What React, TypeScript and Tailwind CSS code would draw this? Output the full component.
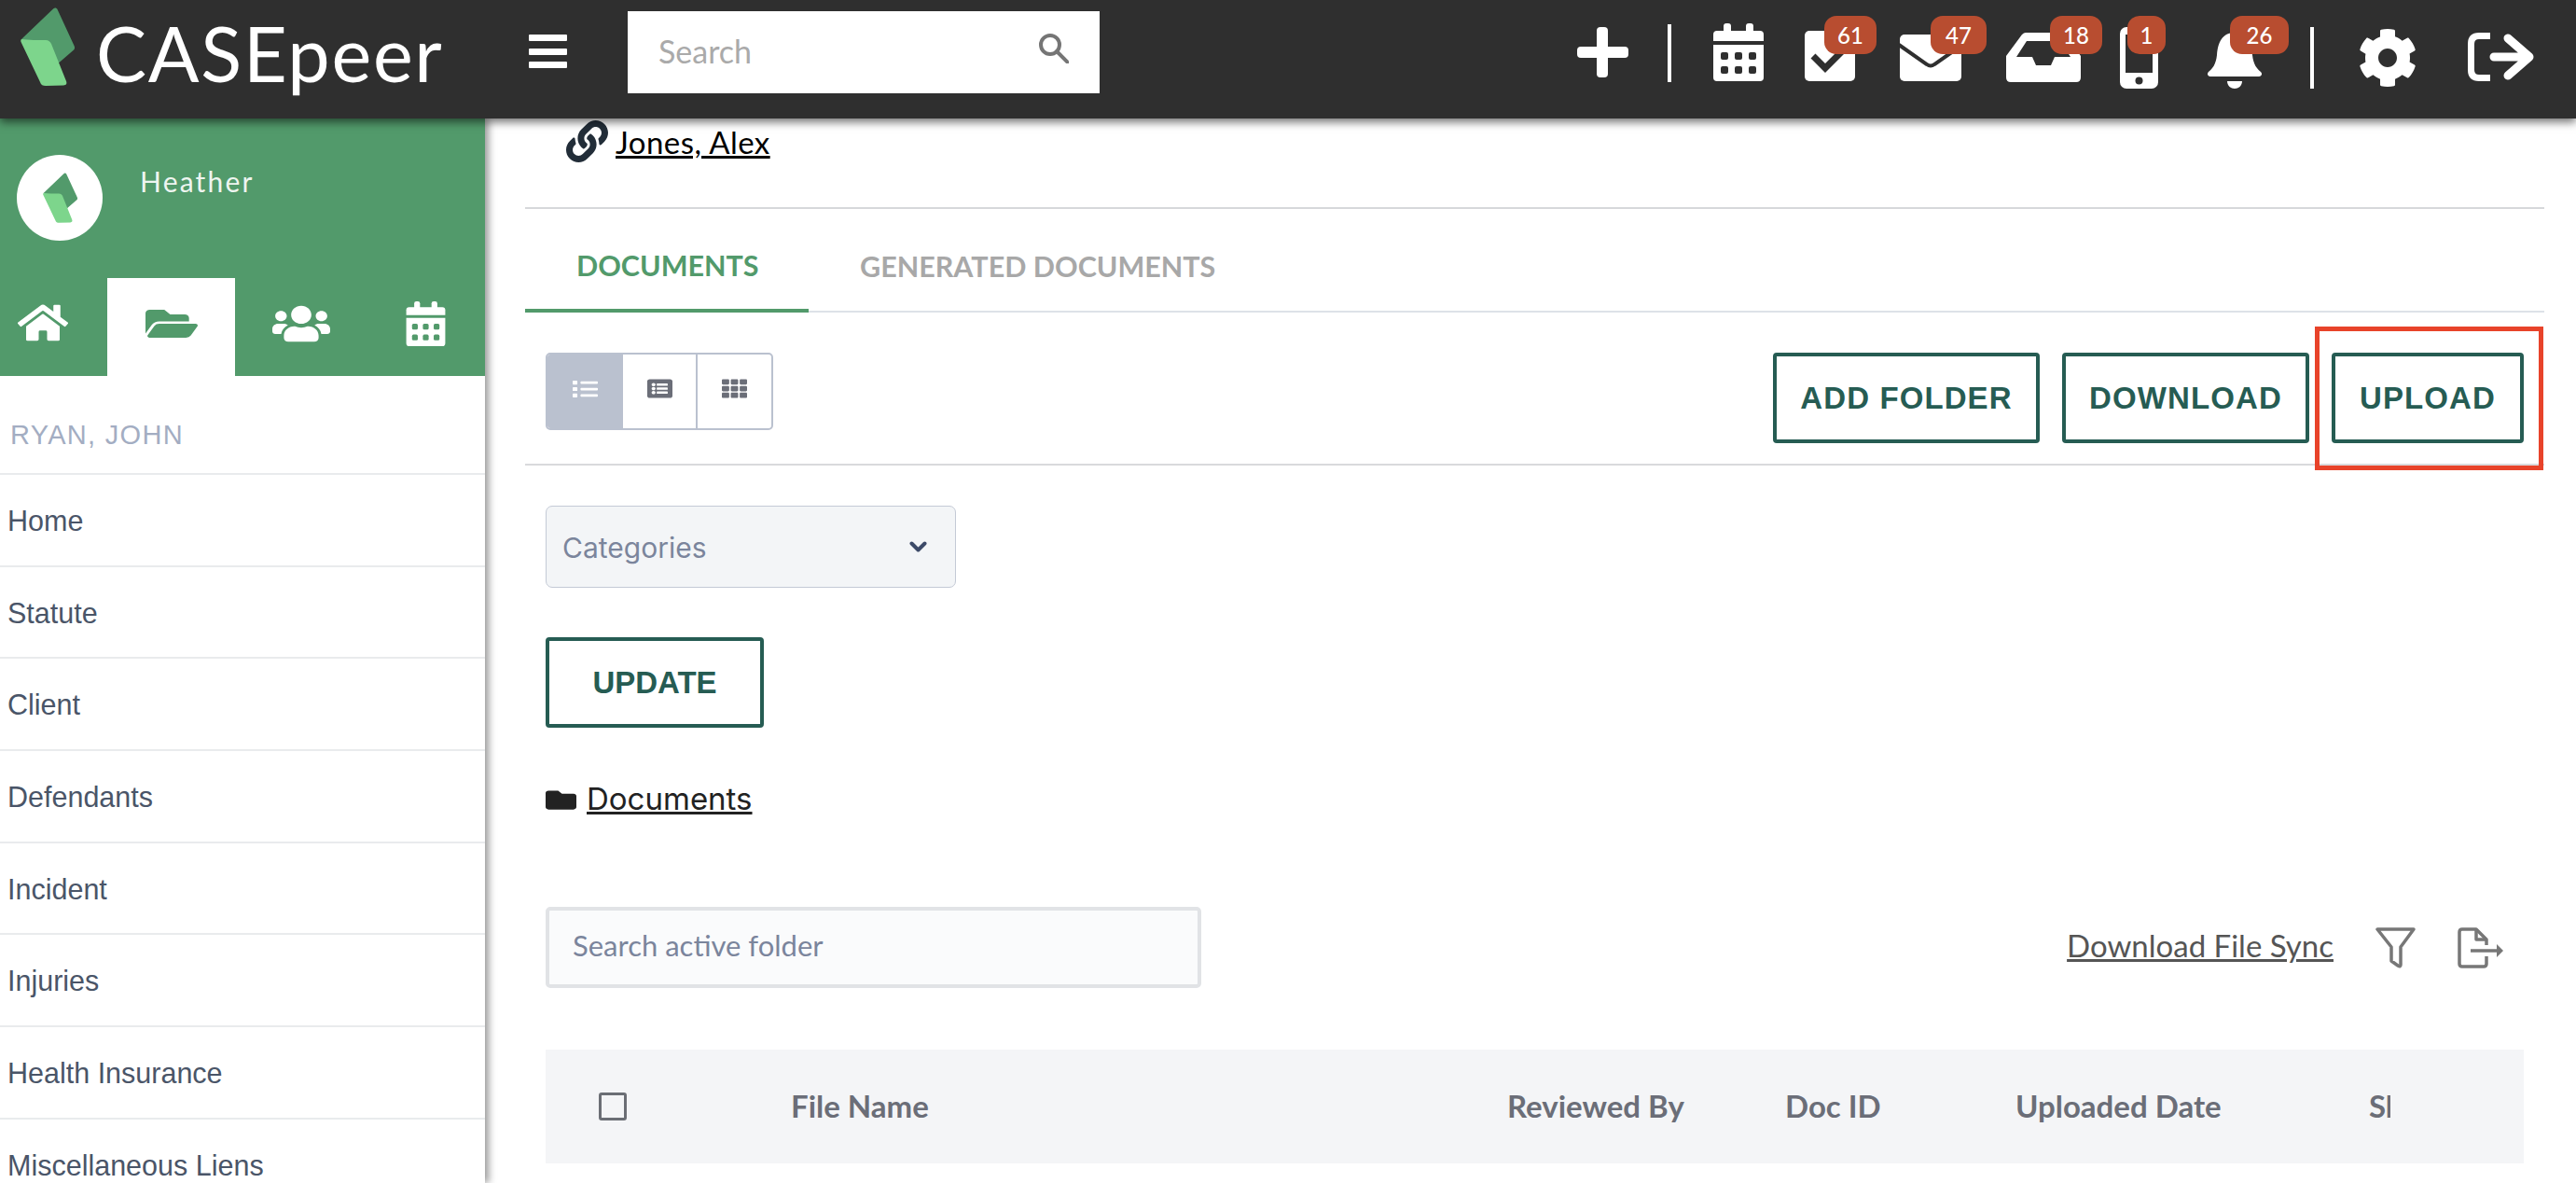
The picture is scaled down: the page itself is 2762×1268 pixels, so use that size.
import { FaCog, FaFolder, FaFolderOpen, FaHome, FaLink, FaListAlt, FaList, FaTh, FaUsers } from 'react-icons/fa';

const sideItems = ['Home', 'Statute', 'Client', 'Defendants', 'Incident', 'Injuries', 'Health Insurance', 'Miscellaneous Liens'];

function Logo({ className }: { className: string }) {
  return (
    <svg viewBox="0 0 58 84" className={className}>
      <path d="M35 1.5C36.5 0 38.5 0 39.5 2L57.5 41C58.5 43 58 45 56.5 46L38 62L1 34Z" fill="#529a6b" />
      <path d="M1 34C8 35 20 35 27 35C30 35 32 37 33 39L49 79C50 82 49 83 46 83.5L27 84C24 84 22 83 21 80L1 38C0 36 0 35 1 34Z" fill="#7dd58c" />
    </svg>
  );
}

function CalendarIcon({ className, cut }: { className: string; cut: string }) {
  return (
    <svg viewBox="0 0 54 62" className={className} fill="#fff">
      <rect x="11" y="0" width="8" height="12" rx="3" />
      <rect x="35" y="0" width="8" height="12" rx="3" />
      <path d="M4 8H50Q54 8 54 12V19H0V12Q0 8 4 8Z" />
      <path d="M0 23H54V58Q54 62 50 62H4Q0 62 0 58Z" />
      {[8, 23, 38].map((x) =>
        [31, 46].map((y) => <rect key={`${x}-${y}`} x={x} y={y} width="8" height="8" rx="2" fill={cut} />)
      )}
    </svg>
  );
}

function Badge({ count, className }: { count: string; className: string }) {
  return (
    <span className={`absolute top-0 h-[41px] rounded-[13px] bg-[#b84d30] text-white text-[24px] font-medium flex items-center justify-center leading-none ${className}`}>
      {count}
    </span>
  );
}

function OutlineButton({ label, className }: { label: string; className: string }) {
  return (
    <button className={`border-[4px] border-[#265c53] rounded-[4px] bg-white text-[#265c53] text-[33px] font-bold font-['Liberation_Sans',sans-serif] flex items-center justify-center ${className}`}>
      {label}
    </button>
  );
}

function Header() {
  return (
    <header className="relative z-20 h-[127px] shrink-0 bg-[#2f2f2f] flex items-start shadow-[0_4px_9px_rgba(0,0,0,0.55)]">
      <Logo className="w-[58px] h-[84px] mt-[8px] ml-[22px]" />
      <span className="ml-[23px] mt-[12px] w-[370px] text-[81px] leading-[90px] text-white font-normal tracking-[1.7px]">CASEpeer</span>
      <div className="ml-[94px] mt-[37px] w-[41px] h-[36px] flex flex-col justify-between">
        <div className="h-[7px] bg-white rounded-[1px]" />
        <div className="h-[7px] bg-white rounded-[1px]" />
        <div className="h-[7px] bg-white rounded-[1px]" />
      </div>
      <div className="ml-[65px] mt-[12px] w-[506px] h-[88px] bg-white flex items-center justify-between pl-[33px] pr-[33px]">
        <span className="text-[34px] text-[#aaaaaa] pb-[3px]">Search</span>
        <svg viewBox="0 0 32 32" className="w-[32px] h-[32px] -mt-[9px]" fill="none" stroke="#757575" strokeWidth="4">
          <circle cx="12" cy="12" r="10" />
          <path d="M19 19L31 31" strokeLinecap="round" />
        </svg>
      </div>

      <div className="ml-auto pr-[45px] flex items-start">
        <svg viewBox="0 0 55 54" className="w-[55px] h-[54px] mt-[29px]" fill="#fff">
          <rect x="21" y="0" width="12" height="54" rx="4" />
          <rect x="0" y="21" width="55" height="12" rx="4" />
        </svg>
        <div className="w-[4px] h-[62px] mt-[26px] ml-[42px] bg-white" />
        <CalendarIcon className="w-[54px] h-[62px] mt-[25px] ml-[45px]" cut="#2f2f2f" />

        <div className="relative w-[54px] h-[87px] ml-[44px]">
          <svg viewBox="0 0 54 54" className="w-[54px] h-[54px] mt-[33px]">
            <rect width="54" height="54" rx="5" fill="#fff" />
            <path d="M9 27L22 40L43 19" fill="none" stroke="#2f2f2f" strokeWidth="7" />
          </svg>
          <Badge count="61" className="mt-[17px] left-[21px] w-[56px]" />
        </div>

        <div className="relative w-[66px] h-[87px] ml-[48px]">
          <svg viewBox="0 0 66 50" className="w-[66px] h-[50px] mt-[37px]">
            <rect width="66" height="50" rx="5" fill="#fff" />
            <path d="M-1 11L29 32Q33 35 37 32L67 11" fill="none" stroke="#2f2f2f" strokeWidth="4" />
          </svg>
          <Badge count="47" className="mt-[17px] left-[33px] w-[60px]" />
        </div>

        <div className="relative w-[80px] h-[88px] ml-[48px]">
          <svg viewBox="0 0 80 53" className="w-[80px] h-[53px] mt-[35px]">
            <path
              fillRule="evenodd"
              fill="#fff"
              d="M21 0H59Q61 0 63 2L80 25V48Q80 53 75 53H5Q0 53 0 48V25L17 2Q19 0 21 0ZM22 9L11 26H28L32 35H48L52 26H69L58 9Z"
            />
          </svg>
          <Badge count="18" className="mt-[17px] left-[47px] w-[56px]" />
        </div>

        <div className="relative w-[41px] h-[95px] ml-[42px]">
          <svg viewBox="0 0 41 66" className="w-[41px] h-[66px] mt-[29px]">
            <rect width="41" height="66" rx="7" fill="#fff" />
            <rect x="6" y="8" width="29" height="41" fill="#2f2f2f" />
            <circle cx="20.5" cy="57.5" r="4" fill="#2f2f2f" />
          </svg>
          <Badge count="1" className="mt-[17px] left-[8px] w-[41px]" />
        </div>

        <div className="relative w-[58px] h-[95px] ml-[53px]">
          <svg viewBox="0 0 58 60" className="w-[58px] h-[60px] mt-[35px]" fill="#fff">
            <path d="M29 0C16 0 11 10 10 24C9 34 5 39 1 42C-1 44 0 47 3 47H55C58 47 59 44 57 42C53 39 49 34 48 24C47 10 42 0 29 0Z" />
            <path d="M21 52H37C37 57 33 60 29 60C25 60 21 57 21 52Z" />
          </svg>
          <Badge count="26" className="mt-[17px] left-[24px] w-[63px]" />
        </div>

        <div className="w-[4px] h-[66px] mt-[29px] ml-[52px] bg-white" />
        <FaCog className="w-[64px] h-[64px] mt-[30px] ml-[47px] text-white" />
        <svg viewBox="0 0 71 52" className="w-[71px] h-[52px] mt-[35px] ml-[54px]" fill="none" stroke="#fff" strokeLinecap="round" strokeLinejoin="round">
          <path d="M24 3.5H12Q3.5 3.5 3.5 12V40Q3.5 48.5 12 48.5H24" strokeWidth="7" strokeLinecap="butt" />
          <path d="M28 26H66M43 6L66 26L43 46" strokeWidth="9" />
        </svg>
      </div>
    </header>
  );
}

function Sidebar() {
  return (
    <aside className="relative z-10 w-[520px] shrink-0 bg-white shadow-[4px_0_8px_rgba(0,0,0,0.4)] overflow-hidden">
      <div className="bg-[#529a6b]">
        <div className="h-[171px] pt-[39px] pl-[18px] flex items-start">
          <div className="w-[92px] h-[92px] rounded-full bg-white flex items-center justify-center">
            <Logo className="w-[37px] h-[54px]" />
          </div>
          <span className="ml-[40px] mt-[6px] text-[30px] leading-[44px] tracking-[2.2px] text-[#eef5f0]">Heather</span>
        </div>
        <div className="h-[105px] flex">
          <div className="w-[115px] pr-[23px] pb-[10px] flex items-center justify-center">
            <FaHome preserveAspectRatio="none" className="w-[54px] h-[44px] text-white" />
          </div>
          <div className="w-[137px] bg-white pb-[8px] flex items-center justify-center">
            <FaFolderOpen preserveAspectRatio="none" className="w-[56px] h-[40px] text-[#529a6b]" />
          </div>
          <div className="w-[137px] pl-[5px] pb-[8px] flex items-center justify-center">
            <FaUsers preserveAspectRatio="none" className="w-[62px] h-[44px] text-white" />
          </div>
          <div className="w-[131px] pl-[3px] pb-[8px] flex items-center justify-center">
            <CalendarIcon className="w-[43px] h-[48px]" cut="#529a6b" />
          </div>
        </div>
      </div>
      <div className="font-['Liberation_Sans',sans-serif]">
        <div className="h-[106px] pt-[23px] pl-[11px] flex items-center border-b-2 border-[#e9ebed] text-[29px] tracking-[1.3px] text-[#a3adc2]">
          RYAN, JOHN
        </div>
        {sideItems.map((item) => (
          <div key={item} className="h-[98.7px] pl-[8px] pt-[3px] flex items-center border-b-2 border-[#e9ebed] text-[30.5px] text-[#4a5568]">
            {item}
          </div>
        ))}
      </div>
    </aside>
  );
}

function Main() {
  return (
    <main className="flex-1 min-w-0 pl-[43px] pr-[34px]">
      <div className="h-[97px] pl-[44px] pt-[2px] flex items-start border-b-2 border-[#d6d8db]">
        <FaLink className="w-[45px] h-[45px] text-[#222d38]" />
        <a className="ml-[8px] mt-[3px] text-[33px] leading-[40px] tracking-[0.45px] text-black underline">Jones, Alex</a>
      </div>

      <div className="h-[111px] flex border-b-2 border-[#dde2e8]">
        <div className="w-[304px] h-[111px] pl-[55px] pt-[14px] flex items-center border-b-[4px] border-[#529a6b] text-[30.5px] font-bold text-[#529a6b]">
          DOCUMENTS
        </div>
        <div className="ml-[55px] pt-[14px] flex items-center text-[30.5px] font-bold text-[#a8a8a8]">GENERATED DOCUMENTS</div>
      </div>

      <div className="h-[164px] px-[22px] pt-[43px] flex items-start justify-between border-b-2 border-[#d9dadc]">
        <div className="w-[244px] h-[83px] flex border-2 border-[#bac1cf] rounded-[5px] overflow-hidden">
          <div className="w-[81px] bg-[#bac1cf] pb-[6px] flex items-center justify-center">
            <FaList preserveAspectRatio="none" className="w-[27px] h-[22px] text-white" />
          </div>
          <div className="w-[80px] border-r-2 border-[#bac1cf] pb-[6px] flex items-center justify-center">
            <FaListAlt preserveAspectRatio="none" className="w-[27px] h-[23px] text-[#6b6e78]" />
          </div>
          <div className="flex-1 pb-[6px] flex items-center justify-center">
            <FaTh preserveAspectRatio="none" className="w-[27px] h-[23px] text-[#6b6e78]" />
          </div>
        </div>
        <div className="flex gap-[24px] tracking-[1.1px]">
          <OutlineButton label="ADD FOLDER" className="w-[286px] h-[97px]" />
          <OutlineButton label="DOWNLOAD" className="w-[265px] h-[97px]" />
          <div className="relative">
            <OutlineButton label="UPLOAD" className="w-[206px] h-[97px]" />
            <div className="absolute -left-[18px] -top-[28px] w-[245px] h-[154px] border-[5px] border-[#e8432a]" />
          </div>
        </div>
      </div>

      <div className="px-[22px]">
        <div className="mt-[43px] w-[440px] h-[88px] pl-[17px] pr-[30px] pt-[2px] flex items-center justify-between bg-[#f3f5f7] border-[1.5px] border-[#c4cad6] rounded-[7px] font-[Inter,sans-serif]">
          <span className="text-[30px] text-[#7b859c]">Categories</span>
          <svg viewBox="0 0 19 13" className="w-[19px] h-[13px] -mt-[2px]" fill="none" stroke="#3c4a68" strokeWidth="4" strokeLinecap="round" strokeLinejoin="round">
            <path d="M2.5 2.5L9.5 9.5L16.5 2.5" />
          </svg>
        </div>

        <OutlineButton label="UPDATE" className="mt-[53px] w-[234px] h-[97px]" />

        <div className="mt-[62px] h-[30px] flex items-center font-[Inter,sans-serif]">
          <FaFolder preserveAspectRatio="none" className="w-[33px] h-[27px] text-[#222222]" />
          <a className="ml-[11px] text-[33px] text-[#222222] underline">Documents</a>
        </div>

        <div className="mt-[100px] flex items-center justify-between">
          <div className="w-[703px] h-[87px] pl-[25px] pb-[5px] flex items-center bg-[#fafbfc] border-[4px] border-[#e1e3e6] rounded-[5px] text-[31px] text-[#7b859c]">
            Search active folder
          </div>
          <div className="flex items-center pr-[22px]">
            <a className="pb-[3px] text-[33px] text-[#555555] underline">Download File Sync</a>
            <svg viewBox="0 0 43 44" className="ml-[45px] w-[43px] h-[44px]" fill="none" stroke="#777777" strokeWidth="3.5" strokeLinejoin="round">
              <path d="M2 2H41L27 21V40Q27 43 24 41L17 36V21Z" />
            </svg>
            <svg viewBox="0 0 49 44" className="ml-[45px] w-[49px] h-[44px]" fill="none" stroke="#777777" strokeWidth="3.5" strokeLinejoin="round">
              <path d="M31 19V13L20 2H5Q2 2 2 5V39Q2 42 5 42H28Q31 42 31 39V31" />
              <path d="M20 2V13H31" />
              <path d="M14 25H43" />
              <path d="M42 18L49 25L42 32Z" fill="#777777" stroke="none" />
            </svg>
          </div>
        </div>

        <div className="mt-[66px] h-[122px] flex items-center bg-[#f4f5f7] text-[33px] font-bold text-[#6b6e78] whitespace-nowrap">
          <div className="w-[263px] pl-[57px]">
            <div className="w-[30px] h-[30px] border-[3px] border-[#6b6e75] rounded-[3px]" />
          </div>
          <span className="w-[768px]">File Name</span>
          <span className="w-[298px]">Reviewed By</span>
          <span className="w-[247px]">Doc ID</span>
          <span className="w-[379px]">Uploaded Date</span>
          <span className="w-[23px] overflow-hidden">Shared</span>
        </div>
      </div>
    </main>
  );
}

export default function App() {
  return (
    <div className="w-[2762px] h-[1268px] overflow-hidden flex flex-col bg-white font-[Lato,sans-serif]">
      <Header />
      <div className="flex flex-1 min-h-0">
        <Sidebar />
        <Main />
      </div>
    </div>
  );
}
